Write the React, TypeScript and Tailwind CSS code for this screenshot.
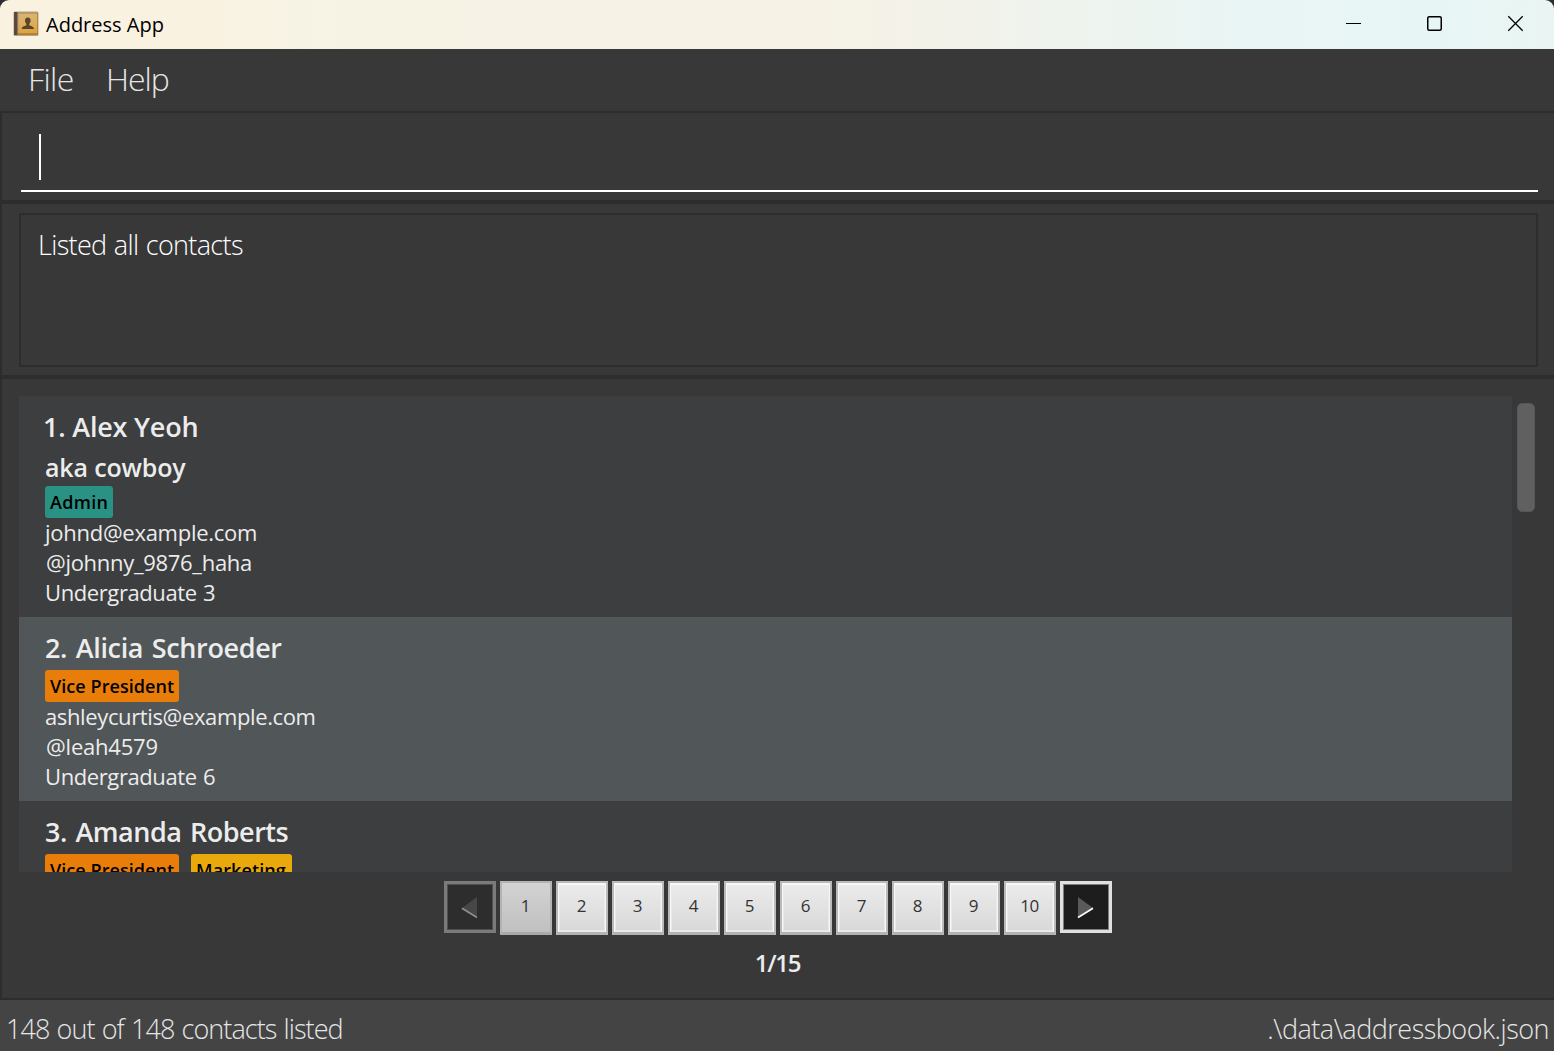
import React from "react";

type Tag = { label: string; className: string };
type Contact = {
  name: string;
  nameClass: string;
  alias?: string;
  tags: Tag[];
  details: { text: string; className: string }[];
  bg: string;
};

const contacts: Contact[] = [
  {
    name: "1. Alex Yeoh",
    nameClass: "-ml-[2px] tracking-[-0.2px]",
    alias: "aka cowboy",
    tags: [{ label: "Admin", className: "w-[68px] bg-[#2a9284] tracking-[0.3px]" }],
    details: [
      { text: "johnd@example.com", className: "tracking-[-0.27px]" },
      { text: "@johnny_9876_haha", className: "pl-px tracking-[-0.3px]" },
      { text: "Undergraduate 3", className: "tracking-[-0.4px] [word-spacing:1px]" },
    ],
    bg: "bg-[#3c3e3f]",
  },
  {
    name: "2. Alicia Schroeder",
    nameClass: "tracking-[-0.36px] [word-spacing:2px]",
    tags: [{ label: "Vice President", className: "w-[134px] bg-[#e87d0a] tracking-[0.06px]" }],
    details: [
      { text: "ashleycurtis@example.com", className: "tracking-[-0.37px]" },
      { text: "@leah4579", className: "pl-px tracking-[-0.2px]" },
      { text: "Undergraduate 6", className: "tracking-[-0.4px] [word-spacing:1px]" },
    ],
    bg: "bg-[#515658]",
  },
  {
    name: "3. Amanda Roberts",
    nameClass: "tracking-[-0.48px] [word-spacing:2px]",
    tags: [
      { label: "Vice President", className: "w-[134px] bg-[#e87d0a] tracking-[0.06px]" },
      { label: "Marketing", className: "w-[101px] bg-[#e9a80c] tracking-[0.1px]" },
    ],
    details: [],
    bg: "bg-[#3c3e3f]",
  },
];

const pages = [1, 2, 3, 4, 5, 6, 7, 8, 9, 10];

function BookIcon() {
  return (
    <svg width="26" height="26" viewBox="0 0 26 26" className="shrink-0">
      <defs>
        <linearGradient id="cover" x1="0" y1="0" x2="0" y2="1">
          <stop offset="0" stopColor="#d6b57a" />
          <stop offset="0.5" stopColor="#dcae5e" />
          <stop offset="1" stopColor="#dea13a" />
        </linearGradient>
      </defs>
      <rect x="0.5" y="0.5" width="25" height="24.5" rx="1.5" fill="#b5a486" />
      <rect x="1" y="1" width="4" height="23" fill="#5c4843" />
      <rect x="4" y="1" width="1.4" height="23" fill="#8b7460" />
      <rect x="5.4" y="1.5" width="19.2" height="21.5" fill="url(#cover)" />
      <rect x="5.4" y="1.2" width="19.4" height="1.6" fill="#b8935a" />
      <rect x="24" y="2" width="1" height="21" fill="#b98a3d" />
      <rect x="5" y="22.4" width="20" height="1.4" fill="#a77526" />
      <path
        d="M14.8 6.6c2 0 2.900 1.400 2.800 3.100-.1 1.500-.7 2.400-1.300 3v1.500c.8.7 4.500 1 4.700 3.800H8.700c.2-2.800 3.800-3.100 4.600-3.800v-1.500c-.7-.6-1.200-1.500-1.300-3-.1-1.700.8-3.100 2.800-3.100z"
        fill="#59452d"
      />
    </svg>
  );
}

function TitleBar() {
  return (
    <div className="h-[49px] bg-[#2c2c38]">
      <div className="flex h-full items-center rounded-t-[9px] bg-[linear-gradient(90deg,#faf2e1_0%,#f9f2e1_13%,#f6f3e5_22%,#f6f2e6_52%,#f2f2ea_62%,#e9f5f4_80%,#e7f6f5_92%,#eaf5f3_100%)] pl-[13px]">
        <div className="-mt-[2px] h-[26px]">
          <BookIcon />
        </div>
        <div className="ml-[7px] text-[20px] leading-[49px] text-black">Address App</div>
        <svg className="ml-auto mr-[29px]" width="200" height="49" fill="none" stroke="#000">
          <path d="M21 23.5h15" />
          <rect x="102.75" y="16.75" width="13.5" height="13.5" rx="1.5" strokeWidth="1.5" />
          <path d="M183.3 16.3l14.4 14.4M197.7 16.3L183.3 30.7" strokeWidth="1.3" />
        </svg>
      </div>
    </div>
  );
}

function ContactCard({ contact }: { contact: Contact }) {
  return (
    <div className={`${contact.bg} pb-[9px] pl-[26px] pt-[13px]`}>
      <div className={`h-10 text-[27px] font-semibold leading-[35px] ${contact.nameClass}`}>{contact.name}</div>
      {contact.alias && (
        <div className="h-[37px] text-[25px] font-semibold leading-[37px] tracking-[-0.15px]">{contact.alias}</div>
      )}
      <div className="flex h-8 gap-3">
        {contact.tags.map((tag) => (
          <span
            key={tag.label}
            className={`h-8 rounded-[3px] pl-[5px] text-[18px] font-semibold leading-8 text-black whitespace-nowrap ${tag.className}`}
          >
            {tag.label}
          </span>
        ))}
      </div>
      {contact.details.map((d) => (
        <div key={d.text} className={`h-[30px] text-[22px] leading-[28px] ${d.className}`}>
          {d.text}
        </div>
      ))}
    </div>
  );
}

function Pagination() {
  return (
    <div className="flex justify-center gap-1">
      <button className="flex size-[52px] items-center justify-center border-[3px] border-[#7b7b7b] bg-[#2d2d2d] shadow-[inset_0_0_0_1px_#505050]">
        <svg width="46" height="46">
          <path d="M30 13v20L15 24z" fill="#474747" />
          <path d="M15 24.2L30 33.5" stroke="#8f8f8f" strokeWidth="1.6" />
        </svg>
      </button>
      {pages.map((p) => (
        <button
          key={p}
          className={
            p === 1
              ? "h-[54px] w-[52px] border-2 border-b-[3px] border-[#b3b3b3] border-b-[#a9a9a9] bg-linear-to-b from-[#d3d3d3] to-[#c0c0c0] pb-[3px] pr-px text-[17px] tracking-[-0.4px] text-[#333]"
              : "h-[54px] w-[52px] border-2 border-b-[3px] border-[#b9b9b9] border-b-[#b3b3b3] bg-linear-to-b from-[#ececec] to-[#d8d8d8] pb-[3px] pr-px text-[17px] tracking-[-0.4px] text-[#333] shadow-[inset_0_1px_0_1px_#f8f8f8,inset_0_0_0_2px_#e9e9e9]"
          }
        >
          {p}
        </button>
      ))}
      <button className="flex size-[52px] items-center justify-center border-[3px] border-[#e0e0e0] bg-[#1d1d1d] shadow-[inset_0_0_0_1px_#7c7f7c]">
        <svg width="46" height="46">
          <path d="M15 13v20L30 24z" fill="#5a5a5a" />
          <path d="M15 33.5L30 24.2" stroke="#fff" strokeWidth="1.6" />
        </svg>
      </button>
    </div>
  );
}

export default function App() {
  return (
    <div className="flex h-[1051px] w-[1554px] flex-col overflow-hidden bg-[#383838] font-['Open_Sans','Noto_Sans',sans-serif] text-[#ececec]">
      <TitleBar />

      <div className="flex h-[62px] pl-[28px] text-[32px] font-light leading-[60px] text-[#e6e6e6]">
        <span className="w-[78px] tracking-[-0.6px]">File</span>
        <span className="tracking-[-1px]">Help</span>
      </div>

      <div className="h-[91px] border-2 border-r-0 border-[#2d2d2d] pl-[19px] pr-4">
        <div className="h-[79px] border-b-2 border-white pl-[18px] pt-[21px]">
          <div className="h-[46px] w-[2px] bg-white" />
        </div>
      </div>

      <div className="h-[175px] border-2 border-r-0 border-[#2d2d2d] pl-[17px] pr-4 pt-[9px]">
        <div className="h-[154px] border-2 border-[#2d2d2d] pl-[17px] pt-[12px] text-[27px] font-light leading-[35px] tracking-[-0.66px] text-white [word-spacing:1px]">
          Listed all contacts
        </div>
      </div>

      <div className="flex h-[623px] flex-col border-2 border-r-0 border-[#2d2d2d] pl-[17px]">
        <div className="mt-[17px] flex h-[476px]">
          <div className="w-[1493px] overflow-hidden">
            {contacts.map((c) => (
              <ContactCard key={c.name} contact={c} />
            ))}
          </div>
          <div className="ml-[5px] mt-[7px] h-[109px] w-[18px] rounded-[5px] border border-[#575757] bg-[#606060]" />
        </div>
        <div className="mr-[17px] mt-[9px]">
          <Pagination />
        </div>
        <div className="mr-[18px] mt-[9px] text-center text-[24px] font-semibold leading-[38px] tracking-[-1.3px]">1/15</div>
      </div>

      <div className="flex h-[51px] justify-between bg-[#444] pl-[6px] pr-[5px] text-[27px] font-light leading-[58px] text-[#e6e6e6]">
        <span className="tracking-[-0.92px] [word-spacing:1px]">148 out of 148 contacts listed</span>
        <span className="tracking-[-0.5px]">.\data\addressbook.json</span>
      </div>
    </div>
  );
}
